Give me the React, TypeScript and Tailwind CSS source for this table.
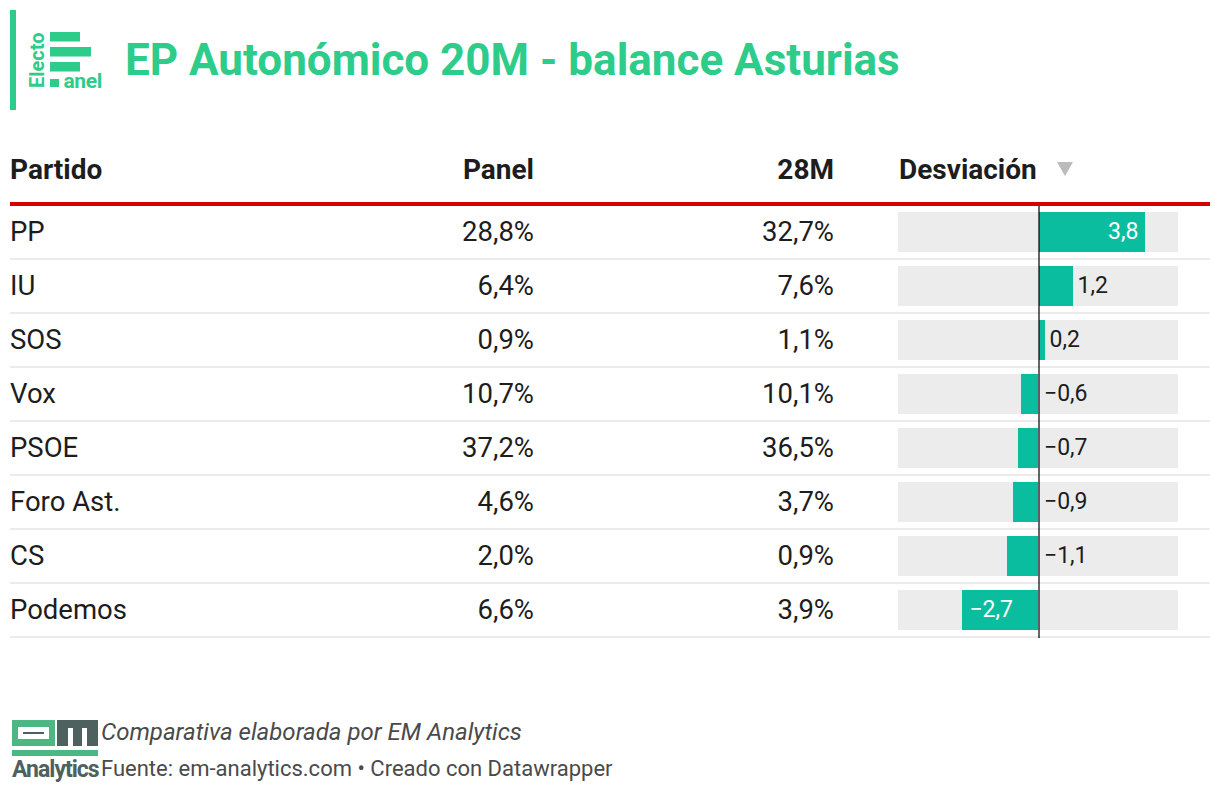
import React from "react";

type Row = { name: string; panel: string; m28: string; dev: number };

const rows: Row[] = [
  { name: "PP", panel: "28,8%", m28: "32,7%", dev: 3.8 },
  { name: "IU", panel: "6,4%", m28: "7,6%", dev: 1.2 },
  { name: "SOS", panel: "0,9%", m28: "1,1%", dev: 0.2 },
  { name: "Vox", panel: "10,7%", m28: "10,1%", dev: -0.6 },
  { name: "PSOE", panel: "37,2%", m28: "36,5%", dev: -0.7 },
  { name: "Foro Ast.", panel: "4,6%", m28: "3,7%", dev: -0.9 },
  { name: "CS", panel: "2,0%", m28: "0,9%", dev: -1.1 },
  { name: "Podemos", panel: "6,6%", m28: "3,9%", dev: -2.7 },
];

const ZERO = 140;
const SCALE = 28;

function fmt(v: number) {
  const s = Math.abs(v).toFixed(1).replace(".", ",");
  return v < 0 ? "\u2212" + s : s;
}

function DevBar({ v }: { v: number }) {
  const w = Math.abs(v) * SCALE;
  const left = v >= 0 ? ZERO + 1 : ZERO - w;
  const inside = Math.abs(v) >= 2;
  return (
    <div className="relative w-[280px] h-[40px] bg-[#ececec]">
      <div className="absolute top-0 h-[40px] bg-[#0bbd9f]" style={{ left, width: w }} />
      {inside ? (
        v >= 0 ? (
          <div
            className="absolute top-0 h-[40px] flex items-center justify-end pr-[7px] text-white text-[23px]"
            style={{ left, width: w }}
          >
            {fmt(v)}
          </div>
        ) : (
          <div
            className="absolute top-0 h-[40px] flex items-center pl-[7px] text-white text-[23px]"
            style={{ left, width: w }}
          >
            {fmt(v)}
          </div>
        )
      ) : (
        <div
          className="absolute top-0 h-[40px] flex items-center text-[#1d1d1d] text-[23px]"
          style={{ left: v >= 0 ? ZERO + 1 + w + 5 : ZERO + 6 }}
        >
          {fmt(v)}
        </div>
      )}
      <div className="absolute left-[140px] top-[-6px] bottom-[-8px] w-[2px] bg-black/60" />
    </div>
  );
}

function ElectoLogo() {
  return (
    <svg width="96" height="64" viewBox="0 0 96 64" className="block overflow-visible">
      <text
        x="0"
        y="0"
        transform="translate(14.5 59) rotate(-90)"
        fill="#2dcc8a"
        fontFamily="Roboto, sans-serif"
        fontWeight="700"
        fontSize="20"
      >
        Electo
      </text>
      <rect x="21" y="3" width="30" height="9.5" fill="#2dcc8a" />
      <rect x="21" y="18" width="41" height="9.5" fill="#2dcc8a" />
      <rect x="21" y="33" width="30" height="9.5" fill="#2dcc8a" />
      <rect x="21" y="50" width="9" height="8" fill="#2dcc8a" />
      <text x="34.5" y="58.5" fill="#2dcc8a" fontFamily="Roboto, sans-serif" fontWeight="700" fontSize="21" letterSpacing="-0.4">
        anel
      </text>
    </svg>
  );
}

function EmLogo() {
  return (
    <div className="flex flex-col w-[86px]">
      <svg width="86" height="37" viewBox="0 0 86 37" className="block">
        <rect x="0" y="0" width="43" height="26" fill="#4cb783" />
        <rect x="6" y="7" width="31" height="12" fill="#ffffff" />
        <rect x="11" y="12" width="21" height="2" fill="#4d615e" />
        <rect x="45" y="0" width="41" height="26" fill="#4d615e" />
        <rect x="56" y="8" width="5" height="18" fill="#ffffff" />
        <rect x="70" y="8" width="5" height="18" fill="#ffffff" />
        <rect x="0" y="30" width="86" height="6" fill="#4cb783" />
      </svg>
      <div className="text-[#4d615e] font-bold text-[23px] leading-[24px] tracking-[-1px] mt-[1px] whitespace-nowrap">Analytics</div>
    </div>
  );
}

export default function App() {
  return (
    <div
      className="w-[1220px] h-[798px] bg-white overflow-hidden pt-[10px]"
      style={{ fontFamily: "Roboto, 'Liberation Sans', sans-serif" }}
    >
      {/* Header */}
      <div className="flex items-start h-[100px] pl-[10px]">
        <div className="w-[6px] h-[100px] bg-[#2dcc8a]" />
        <div className="ml-[13px] mt-[19px]">
          <ElectoLogo />
        </div>
        <h1 className="mt-[28px] text-[44px] font-bold text-[#2dcc8a] leading-none whitespace-nowrap">
          EP Autonómico 20M - balance Asturias
        </h1>
      </div>

      {/* Table */}
      <div className="mx-[10px] mt-[28px] w-[1200px]">
        <div className="grid grid-cols-[300px_224px_300px_64px_312px] h-[68px] items-center border-b-[4px] border-[#d50000] text-[28px] font-bold text-[#1d1d1d]">
          <div>Partido</div>
          <div className="text-right">Panel</div>
          <div className="text-right">28M</div>
          <div />
          <div className="flex items-center">
            <span className="ml-[1px]">Desviación</span>
            <svg width="16" height="14" viewBox="0 0 16 14" className="ml-[20px] mt-[-2px]">
              <polygon points="0,0 16,0 8,14" fill="#bbbbbb" />
            </svg>
          </div>
        </div>
        {rows.map((r) => (
          <div
            key={r.name}
            className="grid grid-cols-[300px_224px_300px_64px_312px] h-[54px] items-center border-b-[2px] border-[#ebebeb] text-[27.5px] text-[#1d1d1d]"
          >
            <div>{r.name}</div>
            <div className="text-right">{r.panel}</div>
            <div className="text-right">{r.m28}</div>
            <div />
            <div>
              <DevBar v={r.dev} />
            </div>
          </div>
        ))}
      </div>

      {/* Footer */}
      <div className="flex ml-[12px] mt-[82px] gap-[3px]">
        <EmLogo />
        <div className="flex flex-col text-[#4a4a4a]">
          <div className="italic text-[24px] leading-[26px] mt-[-1px]">Comparativa elaborada por EM Analytics</div>
          <div className="text-[22px] leading-[26px] mt-[11px]">Fuente: em-analytics.com • Creado con Datawrapper</div>
        </div>
      </div>
    </div>
  );
}
